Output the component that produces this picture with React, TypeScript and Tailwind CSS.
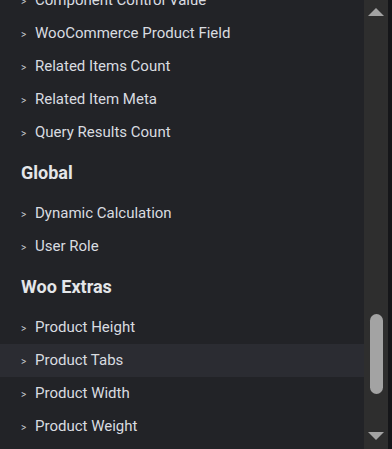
import React from "react";

type Entry = { type: "item"; label: string; active?: boolean } | { type: "heading"; label: string };

const entries: Entry[] = [
  { type: "item", label: "Component Control Value" },
  { type: "item", label: "WooCommerce Product Field" },
  { type: "item", label: "Related Items Count" },
  { type: "item", label: "Related Item Meta" },
  { type: "item", label: "Query Results Count" },
  { type: "heading", label: "Global" },
  { type: "item", label: "Dynamic Calculation" },
  { type: "item", label: "User Role" },
  { type: "heading", label: "Woo Extras" },
  { type: "item", label: "Product Height" },
  { type: "item", label: "Product Tabs", active: true },
  { type: "item", label: "Product Width" },
  { type: "item", label: "Product Weight" },
];

export default function App() {
  return (
    <div
      className="w-[392px] h-[449px] flex bg-[#222327] overflow-hidden"
      style={{ fontFamily: "Roboto, 'Liberation Sans', sans-serif" }}
    >
      <div className="flex-1 overflow-hidden">
        <div className="mt-[-16px]">
          {entries.map((e, i) =>
            e.type === "heading" ? (
              <div
                key={i}
                className="h-[48px] leading-[48px] pl-[21px] text-[18px] font-bold text-[#e4e6e9]"
              >
                {e.label}
              </div>
            ) : (
              <div
                key={i}
                className={`h-[33px] leading-[33px] pl-[21px] text-[15px] text-[#d9dce0] whitespace-nowrap ${
                  e.active ? "bg-[#2b2c32]" : ""
                }`}
              >
                <span className="inline-block w-[14px] text-[10px] text-[#c9ccd0]">&gt;</span>
                {e.label}
              </div>
            )
          )}
        </div>
      </div>
      <div className="w-[24px] bg-[#2e2e2e] flex flex-col items-center">
        <svg width="16" height="8" viewBox="0 0 16 8" className="mt-[8px]">
          <polygon points="8,0 16,8 0,8" fill="#a3a3a3" />
        </svg>
        <div className="mt-[298px] w-[13px] h-[80px] rounded-full bg-[#a3a3a3]" />
        <svg width="16" height="8" viewBox="0 0 16 8" className="mt-[38px]">
          <polygon points="0,0 16,0 8,8" fill="#a3a3a3" />
        </svg>
      </div>
      <div className="w-[4px] bg-[#151619]" />
    </div>
  );
}
